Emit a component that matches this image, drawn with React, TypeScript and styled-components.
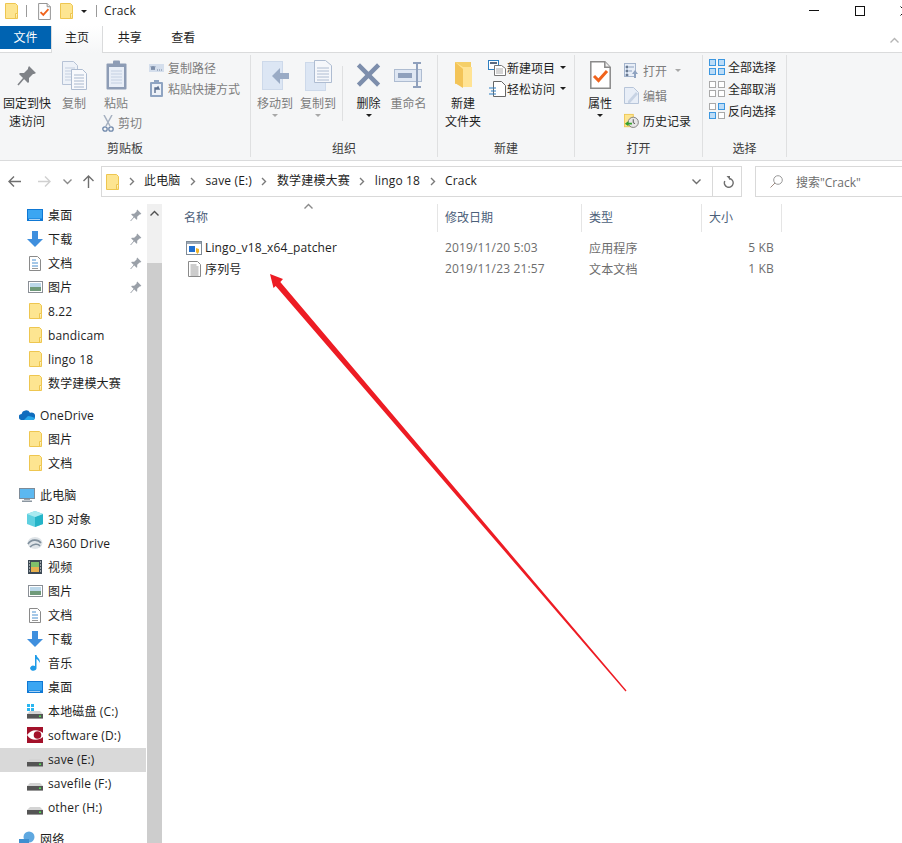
import React from 'react';
import styled, { createGlobalStyle } from 'styled-components';

const GlobalStyle = createGlobalStyle`
    html, body {
        margin: 0;
        padding: 0;
        background: #fff;
        overflow: hidden;
    }
    body {
        font-family: "Open Sans", "Noto Sans CJK SC", sans-serif;
        font-size: 12px;
        color: #1e1e1e;
    }
`;

const Window = styled.div`
    position: relative;
    width: 902px;
    height: 843px;
    display: flex;
    flex-direction: column;
    overflow: hidden;
    background: #fff;
`;

/* ---------- title bar ---------- */

const TitleBar = styled.div`
    height: 26px;
    flex-shrink: 0;
    display: flex;
    align-items: center;
    padding: 0 0 4px 5px;
    box-sizing: border-box;
`;

const TitleDivider = styled.span<{ $left: number; $right: number }>`
    width: 1px;
    height: 12px;
    background: #9a9a9a;
    margin: 0 ${p => p.$right}px 0 ${p => p.$left}px;
`;

const TitleSlot = styled.span<{ $left: number }>`
    display: flex;
    margin-left: ${p => p.$left}px;
`;

const TitleText = styled.span`
    font-size: 12px;
    line-height: 16px;
    letter-spacing: 0.15px;
    flex: 1;
`;

const WindowButton = styled.span<{ $width: number; $inset?: number }>`
    width: ${p => p.$width}px;
    display: flex;
    justify-content: ${p => (p.$inset ? 'flex-start' : 'center')};
    padding-left: ${p => p.$inset || 0}px;
    box-sizing: border-box;
    flex-shrink: 0;
    svg {
        flex-shrink: 0;
    }
`;

/* ---------- tabs ---------- */

const TabRow = styled.div`
    height: 27px;
    flex-shrink: 0;
    display: flex;
    align-items: flex-start;
    box-sizing: border-box;
    border-bottom: 1px solid #dadbdc;
`;

const FileTab = styled.div`
    width: 51px;
    height: 23px;
    background: #0063b1;
    color: #fff;
    text-align: center;
    line-height: 23px;
`;

const Tab = styled.div<{ $active?: boolean }>`
    width: 53.5px;
    height: 26px;
    line-height: 23px;
    text-align: center;
    box-sizing: border-box;
    ${p =>
        p.$active &&
        `
        width: 52px;
        height: 27px;
        background: linear-gradient(#fff, #f5f6f7);
        border: 1px solid #dadbdc;
        border-width: 0 1px;
    `}
`;

const Collapse = styled.span`
    margin: 11px 0 0 auto;
    display: flex;
    width: 12px;
`;

/* ---------- ribbon ---------- */

const Ribbon = styled.div`
    height: 108px;
    flex-shrink: 0;
    box-sizing: border-box;
    display: flex;
    background: #f5f6f7;
    border-bottom: 1px solid #dadbdc;
    padding-top: 2px;
`;

const Group = styled.div<{ $width: number }>`
    width: ${p => p.$width}px;
    height: 102px;
    box-sizing: border-box;
    border-right: 1px solid #dfe0e1;
    display: flex;
    flex-direction: column;
    flex-shrink: 0;
`;

const GroupBody = styled.div<{ $pad?: number }>`
    flex: 1;
    display: flex;
    align-items: flex-start;
    padding-left: ${p => p.$pad || 0}px;
    min-height: 0;
`;

const GroupLabel = styled.div`
    height: 18px;
    line-height: 20px;
    text-align: center;
    color: #3c3c3c;
    flex-shrink: 0;
`;

const BigButton = styled.div<{ $width: number; $muted?: boolean; $left?: number }>`
    width: ${p => p.$width}px;
    margin-left: ${p => p.$left || 0}px;
    flex-shrink: 0;
    color: ${p => (p.$muted ? '#7d7d7d' : '#1e1e1e')};
    display: flex;
    flex-direction: column;
    align-items: center;
    text-align: center;
    line-height: 18px;
`;

const BigIcon = styled.div`
    height: 40px;
    display: flex;
    align-items: center;
    justify-content: center;
    box-sizing: border-box;
    width: 100%;
`;

const Caret = styled.span<{ $muted?: boolean }>`
    width: 0;
    height: 0;
    border: 3px solid transparent;
    border-bottom: 0;
    border-top: 3px solid ${p => (p.$muted ? '#a8a8a8' : '#1e1e1e')};
    flex-shrink: 0;
    margin: 1px 0 0 0;
`;

const InlineCaret = styled(Caret)`
    margin: 0 0 0 4px;
`;

const TitleCaret = styled(Caret)`
    margin: 0 0 0 8px;
`;

const Stack = styled.div<{ $width: number; $top?: number; $left?: number }>`
    width: ${p => p.$width}px;
    flex-shrink: 0;
    margin: ${p => p.$top || 0}px 0 0 ${p => p.$left || 0}px;
    display: flex;
    flex-direction: column;
`;

const SmallAction = styled.div<{ $height?: number; $muted?: boolean; $gap?: number; $indent?: number }>`
    height: ${p => p.$height || 21}px;
    display: flex;
    align-items: center;
    gap: ${p => (p.$gap === undefined ? 4 : p.$gap)}px;
    padding-left: ${p => p.$indent || 0}px;
    white-space: nowrap;
    color: ${p => (p.$muted ? '#7d7d7d' : '#1e1e1e')};
`;

const SmallIcon = styled.span<{ $width?: number }>`
    width: ${p => p.$width || 15}px;
    display: flex;
    justify-content: center;
    flex-shrink: 0;
`;

const InnerDivider = styled.span`
    width: 1px;
    height: 55px;
    margin: 11px 0 0 3px;
    background: #dfe0e1;
    flex-shrink: 0;
`;

/* ---------- address row ---------- */

const AddressRow = styled.div`
    height: 43px;
    flex-shrink: 0;
    display: flex;
    align-items: flex-start;
    padding-top: 5px;
    box-sizing: border-box;
`;

const NavButton = styled.span<{ $width: number }>`
    width: ${p => p.$width}px;
    height: 31px;
    display: flex;
    align-items: center;
    justify-content: center;
    flex-shrink: 0;
`;

const AddressBox = styled.div`
    width: 641px;
    height: 31px;
    flex-shrink: 0;
    box-sizing: border-box;
    border: 1px solid #d9d9d9;
    display: flex;
    align-items: center;
    padding-left: 4px;
`;

const CrumbSep = styled.span`
    width: 25px;
    display: flex;
    justify-content: center;
    flex-shrink: 0;
`;

const Crumb = styled.span`
    white-space: nowrap;
    letter-spacing: 0.15px;
    line-height: 16px;
    margin-top: -1px;
`;

const BoxEnd = styled.div`
    margin-left: auto;
    display: flex;
    align-items: center;
    height: 100%;
`;

const RefreshCell = styled.span`
    width: 29px;
    height: 100%;
    border-left: 1px solid #d9d9d9;
    display: flex;
    align-items: center;
    justify-content: center;
    margin-left: 11px;
    padding-left: 2px;
    box-sizing: border-box;
`;

const SearchBox = styled.div`
    flex: 1;
    height: 31px;
    margin-left: 13px;
    box-sizing: border-box;
    border: 1px solid #d9d9d9;
    border-right: 0;
    display: flex;
    align-items: center;
    padding-left: 14px;
    gap: 13px;
    color: #6d6d6d;
`;

/* ---------- main area ---------- */

const Main = styled.div`
    flex: 1;
    display: flex;
    min-height: 0;
`;

const Sidebar = styled.nav`
    width: 147px;
    flex-shrink: 0;
    overflow: hidden;
`;

const NavRow = styled.div<{ $level: number; $selected?: boolean; $spaced?: boolean }>`
    height: 24px;
    width: 146px;
    margin-top: ${p => (p.$spaced ? 8 : 0)}px;
    box-sizing: border-box;
    padding: 0 4px 2px ${p => (p.$level ? 27 : 19)}px;
    display: flex;
    align-items: center;
    background: ${p => (p.$selected ? '#d9d9d9' : 'transparent')};
    white-space: nowrap;
    letter-spacing: 0.15px;
`;

const NavIcon = styled.span`
    width: 16px;
    margin-right: 5px;
    display: flex;
    justify-content: center;
    flex-shrink: 0;
`;

const PinSlot = styled.span`
    margin-left: auto;
    display: flex;
`;

const Scrollbar = styled.div`
    width: 15px;
    flex-shrink: 0;
    background: #f0f0f0;
    display: flex;
    flex-direction: column;
`;

const ScrollUp = styled.div`
    height: 59px;
    display: flex;
    justify-content: center;
    padding-top: 6px;
    box-sizing: border-box;
    flex-shrink: 0;
`;

const ScrollThumb = styled.div`
    flex: 1;
    background: #cdcdcd;
`;

const FileList = styled.section`
    flex: 1;
    min-width: 0;
`;

const Columns = '276px 144px 120px 80px';

const HeaderRow = styled.div`
    display: grid;
    grid-template-columns: ${Columns};
    height: 27px;
    margin-bottom: 6px;
`;

const HeaderCell = styled.div<{ $first?: boolean }>`
    position: relative;
    box-sizing: border-box;
    border-right: 1px solid #e5e5e5;
    padding-left: ${p => (p.$first ? 22 : 7)}px;
    line-height: 28px;
    color: #4c607a;
`;

const SortMark = styled.span`
    position: absolute;
    top: -1px;
    left: 142px;
    display: flex;
`;

const FileRow = styled.div`
    display: grid;
    grid-template-columns: ${Columns};
    height: 21px;
    align-items: center;
    color: #6d6d6d;
    letter-spacing: 0.15px;
`;

const NameCell = styled.div`
    display: flex;
    align-items: center;
    padding-left: 24px;
    gap: 3px;
    color: #1e1e1e;
`;

const FileIcon = styled.span`
    width: 16px;
    display: flex;
    justify-content: center;
    flex-shrink: 0;
`;

const Cell = styled.div`
    padding-left: 7px;
`;

const SizeCell = styled.div`
    text-align: right;
    padding-right: 8px;
`;

const ArrowLayer = styled.svg`
    position: absolute;
    top: 0;
    left: 0;
    pointer-events: none;
`;

/* ---------- icons ---------- */

const Folder = () => (
    <svg width="13" height="16" viewBox="0 0 13 16">
        <path d="M.5.5h10l2 2v13H.5z" fill="#fde591" stroke="#eec650" />
        <path d="M10.5 15.5v-5h2" fill="#fff3c4" stroke="#eec650" />
    </svg>
);

const DocCheck = ({ w = 13, h = 17 }: { w?: number; h?: number }) => (
    <svg width={w} height={h} viewBox="0 0 21 28">
        <path d="M.8.8h14l5.4 5.4v21H.8z" fill="#fff" stroke="#8a8a8a" strokeWidth="1.5" />
        <path d="M14.8.8v5.4h5.4" fill="#eee" stroke="#8a8a8a" strokeWidth="1.5" />
        <path d="M4 15l4.5 4.5L17 10" fill="none" stroke="#f0631c" strokeWidth="3" />
    </svg>
);

const Pin = ({ size = 20, color = '#7f8287' }: { size?: number; color?: string }) => (
    <svg width={size} height={size + 2} viewBox="0 0 20 22">
        <path d="M12 1l7 7-2 1-1 0-4 4 0 4-1 1-3-3-3-3-3-3 1-1 4 0 4-4 0-1z" transform="translate(0 1)" fill={color} />
        <path d="M7 14l-6 7" stroke={color} strokeWidth="1.6" />
    </svg>
);

const CopyDocs = () => (
    <svg width="25" height="29" viewBox="0 0 25 29">
        <path d="M.5.5h11l4 4v19H.5z" fill="#eef2f8" stroke="#b7c3d6" />
        <path d="M3 7h10M3 10h10M3 13h6M3 16h6M3 19h6" stroke="#c4cfe0" />
        <path d="M9.5 8.5h11l4 4v16h-15z" fill="#f8f9fc" stroke="#aebcd1" />
        <path d="M12 14h10M12 17h10M12 20h10M12 23h10M12 26h10" stroke="#a9b8ce" />
    </svg>
);

const Clipboard = () => (
    <svg width="21" height="30" viewBox="0 0 21 30">
        <rect x=".5" y="3.5" width="20" height="26" fill="#8d9cb5" rx="1" />
        <rect x="3" y="7" width="15" height="20" fill="#e8eef7" />
        <rect x="7" y=".5" width="7" height="5" fill="#8d9cb5" rx="1" />
        <path d="M5 11h11M5 14h11M5 17h11M5 20h11M5 23h11" stroke="#c4d0e2" />
    </svg>
);

const Scissors = () => (
    <svg width="12" height="17" viewBox="0 0 12 17">
        <path d="M2 0l6 11M10 0L4 11" stroke="#a5b0c0" strokeWidth="1.5" fill="none" />
        <circle cx="3" cy="14" r="2.2" fill="none" stroke="#6f88ab" strokeWidth="1.3" />
        <circle cx="9" cy="14" r="2.2" fill="none" stroke="#6f88ab" strokeWidth="1.3" />
    </svg>
);

const CopyPath = () => (
    <svg width="15" height="8" viewBox="0 0 15 8">
        <rect width="15" height="8" fill="#d4deec" />
        <path d="M2 2l1 4 1-4 1 4 1-4M8 6h1M10 6h1M12 6h1" stroke="#5d7191" strokeWidth=".8" fill="none" />
    </svg>
);

const PasteShortcut = () => (
    <svg width="13" height="17" viewBox="0 0 13 17">
        <rect y="2" width="13" height="15" fill="#8fa4c2" rx="1" />
        <rect x="2" y="4" width="9" height="11" fill="#eef2f8" />
        <rect x="4" width="5" height="3" fill="#8fa4c2" />
        <path d="M5 13V8h3M8 7l-2 2 3 0z" stroke="#5d7191" strokeWidth="1.4" fill="none" />
    </svg>
);

const MoveTo = () => (
    <svg width="27" height="29" viewBox="0 0 27 29">
        <rect x=".5" y=".5" width="20" height="28" fill="#dce6f4" stroke="#cdd9ea" />
        <path d="M27 12h-9V7l-8 8 8 8v-5h9z" fill="#9aabc5" />
    </svg>
);

const CopyTo = () => (
    <svg width="27" height="31" viewBox="0 0 27 31">
        <rect x=".5" y="2.5" width="20" height="28" fill="#dce6f4" stroke="#cdd9ea" />
        <path d="M9.5.5h11l6 5v17h-17z" fill="#f5f7fb" stroke="#aebcd1" />
        <path d="M12 8h12M12 11h12M12 14h12M12 17h12M12 20h12" stroke="#aebcd1" />
    </svg>
);

const DeleteX = () => (
    <svg width="26" height="26" viewBox="0 0 26 26">
        <path d="M2.5 2.5l21 21M23.5 2.5l-21 21" stroke="#7d8eac" strokeWidth="4.6" />
    </svg>
);

const Rename = () => (
    <svg width="29" height="26" viewBox="0 0 29 26">
        <rect x=".5" y="7.5" width="27" height="12" fill="#dfe7f3" stroke="#aebcd1" />
        <rect x="4" y="11" width="14" height="5" fill="#8fa0bc" />
        <path d="M19 1h8M23 1v24M19 25h8" stroke="#8fa0bc" strokeWidth="2" fill="none" />
    </svg>
);

const NewFolder = () => (
    <svg width="19" height="28" viewBox="0 0 19 28">
        <path d="M1 1h16v22H1z" fill="#f5cf68" />
        <path d="M1 1l8 5h9v20H9l-8-4z" fill="#ffe394" />
        <path d="M1 1l8 7v19l-8-5z" fill="#f3c458" />
    </svg>
);

const NewItem = () => (
    <svg width="18" height="16" viewBox="0 0 18 16">
        <rect x=".5" y=".5" width="10" height="9" fill="#fff" stroke="#2f7fc1" />
        <rect x="2" y="2" width="7" height="2" fill="#5d6b80" />
        <path d="M6.5 5.5h7l4 3v7h-11z" fill="#fff" stroke="#777" />
        <path d="M8 9h7M8 11h7M8 13h7" stroke="#aaa" />
    </svg>
);

const EasyAccess = () => (
    <svg width="17" height="16" viewBox="0 0 17 16">
        <path d="M4.5.5h8l4 4v11h-12z" fill="#fff" stroke="#666" />
        <path d="M0 7h7M2 10h5M0 13h7" stroke="#2f7fc1" strokeWidth="1.2" />
    </svg>
);

const OpenIcon = () => (
    <svg width="15" height="15" viewBox="0 0 15 15">
        <rect x=".5" y=".5" width="11" height="13" fill="#e8eef7" stroke="#a4b4cc" />
        <path d="M2 3h2v2H2zM2 7h2v2H2zM2 11h2v2H2zM5 4h5M5 8h3" stroke="#8fa3c0" />
        <path d="M8 11l3-4 3 4h-2v4h-2v-4z" fill="#8fa3c0" />
    </svg>
);

const EditIcon = () => (
    <svg width="15" height="17" viewBox="0 0 15 17">
        <path d="M.5.5h9l5 5v11H.5z" fill="#e8eef7" stroke="#b7c5d9" />
        <path d="M4 14l8-9 2 2-8 9H4z" fill="#c7d3e4" />
    </svg>
);

const HistoryIcon = () => (
    <svg width="17" height="16" viewBox="0 0 17 16">
        <rect x=".5" y=".5" width="10" height="14" fill="#fde591" stroke="#eec650" />
        <circle cx="10.5" cy="9.5" r="5.8" fill="#e6e6e6" stroke="#777" />
        <path d="M10.5 6v4l2 1" stroke="#444" fill="none" />
        <path d="M1 11l4-3v2h4v2H5v2z" fill="#34a02c" />
    </svg>
);

const Grid = ({ on }: { on: boolean[] }) => {
    const cells = [
        [0, 0],
        [9, 0],
        [0, 9],
        [9, 9],
    ];
    return (
        <svg width="16" height="16" viewBox="0 0 16 16">
            {cells.map(([x, y], i) => (
                <rect
                    key={i}
                    x={x + 0.5}
                    y={y + 0.5}
                    width="6"
                    height="6"
                    fill={on[i] ? '#bcdcf7' : '#fff'}
                    stroke={on[i] ? '#3c97e0' : '#a9a9a9'}
                />
            ))}
        </svg>
    );
};

const Chevron = ({ dir = 'right', color = '#7a7a7a' }: { dir?: string; color?: string }) => {
    const d: Record<string, string> = {
        right: 'M1 1l3.5 3.5L1 8',
        down: 'M.5 1.5L4.5 5.5 8.5 1.5',
        up: 'M.5 5.5L4.5 1.5 8.5 5.5',
    };
    return (
        <svg width={dir === 'right' ? 6 : 9} height={dir === 'right' ? 9 : 7} viewBox={dir === 'right' ? '0 0 6 9' : '0 0 9 7'}>
            <path d={d[dir]} fill="none" stroke={color} strokeWidth="1.4" />
        </svg>
    );
};

const ArrowGlyph = ({ d, color }: { d: string; color: string }) => (
    <svg width="13" height="13" viewBox="0 0 13 13">
        <path d={d} fill="none" stroke={color} strokeWidth="1.4" />
    </svg>
);

const Desktop = () => (
    <svg width="16" height="12" viewBox="0 0 16 12">
        <rect width="16" height="12" fill="#0f78d4" />
        <rect x="1" y="1" width="14" height="8.5" fill="#3ba6f2" />
        <rect x="2" y="10.2" width="11" height=".8" fill="#cfe8fb" />
    </svg>
);

const DownArrow = () => (
    <svg width="16" height="16" viewBox="0 0 16 16">
        <path d="M5 0h6v8h5l-8 8-8-8h5z" fill="#3f8fde" />
    </svg>
);

const TextDoc = () => (
    <svg width="12" height="15" viewBox="0 0 12 15">
        <path d="M.5.5h8l3 3v11H.5z" fill="#fff" stroke="#8a8a8a" />
        <path d="M3 4h4M3 7h6M3 10h6" stroke="#4a90d0" />
        <path d="M3 12.5h6" stroke="#999" />
    </svg>
);

const Picture = () => (
    <svg width="15" height="12" viewBox="0 0 15 12">
        <rect x=".5" y=".5" width="14" height="11" fill="#fff" stroke="#8a8f96" />
        <rect x="2" y="2" width="11" height="4" fill="#bcd8ea" />
        <rect x="2" y="6" width="11" height="4" fill="#6f9a7a" />
    </svg>
);

const Cloud = () => (
    <svg width="16" height="10" viewBox="0 0 16 10">
        <path d="M3 10a3 3 0 0 1-.4-6A4.5 4.5 0 0 1 11 2.8 3.6 3.6 0 0 1 16 7c0 2-1 3-2.5 3z" fill="#0f6cbd" />
        <path d="M5 10l4-4 3 .4L16 8c-.3 1.3-1.2 2-2.5 2z" fill="#28a8ea" />
    </svg>
);

const Computer = () => (
    <svg width="16" height="14" viewBox="0 0 16 14">
        <rect x=".5" y=".5" width="15" height="10" fill="#5cb8f0" stroke="#7d8b98" />
        <rect x="5" y="11" width="6" height="1" fill="#9aa4ad" />
        <rect x="3" y="12.5" width="10" height="1.5" fill="#8b96a0" />
    </svg>
);

const Cube = () => (
    <svg width="16" height="16" viewBox="0 0 16 16">
        <path d="M8 0l8 3v10l-8 3-8-3V3z" fill="#5fd0e0" />
        <path d="M8 6l8-3v10l-8 3z" fill="#25b4c8" />
        <path d="M8 0l8 3-8 3-8-3z" fill="#a9eaf0" />
    </svg>
);

const A360 = () => (
    <svg width="16" height="14" viewBox="0 0 16 14">
        <ellipse cx="8" cy="7" rx="7.5" ry="6" fill="#dfe4e8" />
        <path d="M1 8c3-5 10-5 13-1M3 11c3-3 8-4 10-1" stroke="#7f8f9c" strokeWidth="1.6" fill="none" />
    </svg>
);

const Video = () => (
    <svg width="14" height="14" viewBox="0 0 14 14">
        <rect width="14" height="14" fill="#3d4a55" />
        <rect x="3" y="2" width="8" height="5" fill="#7fc06a" />
        <rect x="3" y="7" width="8" height="5" fill="#e7b04f" />
        <path d="M1 2h1M1 5h1M1 8h1M1 11h1M12 2h1M12 5h1M12 8h1M12 11h1" stroke="#fff" />
    </svg>
);

const Music = () => (
    <svg width="12" height="16" viewBox="0 0 12 16">
        <path d="M6 0h1.5c.5 3 4.5 4 3 8-.3-2-2-3.5-3-4v9.500A3.200 2.600 0 1 1 6 11z" fill="#1e9be8" />
    </svg>
);

const Drive = ({ windows }: { windows?: boolean }) => (
    <svg width="16" height="15" viewBox="0 0 16 15">
        {windows && <path d="M0 0h3v3H0zM4 0h3v3H4zM0 4h3v3H0zM4 4h3v3H4z" fill="#29b6f0" />}
        <path d="M3 7h10l3 3H0z" fill="#d4d4d4" />
        <rect y="10" width="16" height="4.5" fill="#555" />
        <rect x="12" y="11.5" width="2" height="1.5" fill="#4fe04f" />
        <rect y="14" width="16" height="1" fill="#999" />
    </svg>
);

const RedDrive = () => (
    <svg width="16" height="16" viewBox="0 0 16 16">
        <rect width="16" height="16" fill="#a3112a" />
        <path d="M0 8c4-6 11-6 16-2v4C11 14 4 14 0 8z" fill="#fff" />
        <circle cx="10.5" cy="8" r="3.8" fill="#a3112a" />
    </svg>
);

const Network = () => (
    <svg width="16" height="16" viewBox="0 0 16 16">
        <circle cx="10" cy="6" r="5.5" fill="#5fa8e0" />
        <rect y="8" width="10" height="8" fill="#3f8fd0" />
    </svg>
);

const AppIcon = () => (
    <svg width="16" height="14" viewBox="0 0 16 14">
        <rect x=".5" y=".5" width="15" height="13" fill="#fff" stroke="#7f8b97" />
        <rect x="1" y="1" width="14" height="2" fill="#9aa7b5" />
        <rect x="3" y="5" width="6" height="6" fill="#1f6fd0" />
        <path d="M10 7l3 1v3l-1.5 2-1.5-2z" fill="#f0b429" />
    </svg>
);

const TextFile = () => (
    <svg width="13" height="16" viewBox="0 0 13 16">
        <path d="M.5.5h9l3 3v12H.5z" fill="#fff" stroke="#8a8a8a" />
        <path d="M2.5 4h6M2.5 6h8M2.5 8h8M2.5 10h8M2.5 12h8M2.5 14h8" stroke="#9a9a9a" />
    </svg>
);

const SearchGlass = () => (
    <svg width="13" height="13" viewBox="0 0 13 13">
        <circle cx="8" cy="5" r="4.3" fill="none" stroke="#9a9a9a" />
        <path d="M5 8l-4.500 4.500" stroke="#a08a80" />
    </svg>
);

const Refresh = () => (
    <svg width="11" height="13" viewBox="0 0 11 13">
        <path d="M6 2.500A4.400 4.400 0 1 1 1.800 5" fill="none" stroke="#6f6f6f" strokeWidth="1.4" transform="translate(0 1)" />
        <path d="M3.500 0h3.500v4z" fill="#6f6f6f" transform="translate(0 1)" />
    </svg>
);

/* ---------- data ---------- */

type NavEntry = {
    label: string;
    icon: React.ReactNode;
    level: number;
    pinned?: boolean;
    selected?: boolean;
    spaced?: boolean;
};

const navEntries: NavEntry[] = [
    { label: '桌面', icon: <Desktop />, level: 1, pinned: true },
    { label: '下载', icon: <DownArrow />, level: 1, pinned: true },
    { label: '文档', icon: <TextDoc />, level: 1, pinned: true },
    { label: '图片', icon: <Picture />, level: 1, pinned: true },
    { label: '8.22', icon: <Folder />, level: 1 },
    { label: 'bandicam', icon: <Folder />, level: 1 },
    { label: 'lingo 18', icon: <Folder />, level: 1 },
    { label: '数学建模大赛', icon: <Folder />, level: 1 },
    { label: 'OneDrive', icon: <Cloud />, level: 0, spaced: true },
    { label: '图片', icon: <Folder />, level: 1 },
    { label: '文档', icon: <Folder />, level: 1 },
    { label: '此电脑', icon: <Computer />, level: 0, spaced: true },
    { label: '3D 对象', icon: <Cube />, level: 1 },
    { label: 'A360 Drive', icon: <A360 />, level: 1 },
    { label: '视频', icon: <Video />, level: 1 },
    { label: '图片', icon: <Picture />, level: 1 },
    { label: '文档', icon: <TextDoc />, level: 1 },
    { label: '下载', icon: <DownArrow />, level: 1 },
    { label: '音乐', icon: <Music />, level: 1 },
    { label: '桌面', icon: <Desktop />, level: 1 },
    { label: '本地磁盘 (C:)', icon: <Drive windows />, level: 1 },
    { label: 'software (D:)', icon: <RedDrive />, level: 1 },
    { label: 'save (E:)', icon: <Drive />, level: 1, selected: true },
    { label: 'savefile (F:)', icon: <Drive />, level: 1 },
    { label: 'other (H:)', icon: <Drive />, level: 1 },
    { label: '网络', icon: <Network />, level: 0, spaced: true },
];

const crumbs = ['此电脑', 'save (E:)', '数学建模大赛', 'lingo 18', 'Crack'];

const files = [
    { name: 'Lingo_v18_x64_patcher', icon: <AppIcon />, date: '2019/11/20 5:03', type: '应用程序', size: '5 KB' },
    { name: '序列号', icon: <TextFile />, date: '2019/11/23 21:57', type: '文本文档', size: '1 KB' },
];

const App = () => {
    return (
        <Window>
            <GlobalStyle />
            <TitleBar>
                <Folder />
                <TitleDivider $left={8} $right={11} />
                <DocCheck />
                <TitleSlot $left={9}>
                    <Folder />
                </TitleSlot>
                <TitleCaret />
                <TitleDivider $left={9} $right={7} />
                <TitleText>Crack</TitleText>
                <WindowButton $width={46}>
                    <svg width="10" height="2" viewBox="0 0 10 2">
                        <rect width="10" height="1" fill="#111" />
                    </svg>
                </WindowButton>
                <WindowButton $width={46}>
                    <svg width="10" height="10" viewBox="0 0 10 10">
                        <rect x=".5" y=".5" width="9" height="9" fill="none" stroke="#111" />
                    </svg>
                </WindowButton>
                <WindowButton $width={19} $inset={17}>
                    <svg width="10" height="10" viewBox="0 0 10 10">
                        <path d="M.5.5l9 9M9.5.5l-9 9" stroke="#111" />
                    </svg>
                </WindowButton>
            </TitleBar>

            <TabRow>
                <FileTab>文件</FileTab>
                <Tab $active>主页</Tab>
                <Tab>共享</Tab>
                <Tab>查看</Tab>
                <Collapse>
                    <Chevron dir="up" color="#b5b5b5" />
                </Collapse>
            </TabRow>

            <Ribbon>
                <Group $width={251}>
                    <GroupBody>
                        <BigButton $width={54}>
                            <BigIcon>
                                <Pin />
                            </BigIcon>
                            固定到快
                            <br />
                            速访问
                        </BigButton>
                        <BigButton $width={40} $muted>
                            <BigIcon>
                                <CopyDocs />
                            </BigIcon>
                            复制
                        </BigButton>
                        <Stack $width={44}>
                            <BigButton $width={44} $muted>
                                <BigIcon>
                                    <Clipboard />
                                </BigIcon>
                                粘贴
                            </BigButton>
                            <SmallAction $height={20} $muted $indent={8} $gap={4}>
                                <SmallIcon $width={12}>
                                    <Scissors />
                                </SmallIcon>
                                剪切
                            </SmallAction>
                        </Stack>
                        <Stack $width={100} $top={2} $left={11}>
                            <SmallAction $muted>
                                <SmallIcon>
                                    <CopyPath />
                                </SmallIcon>
                                复制路径
                            </SmallAction>
                            <SmallAction $muted>
                                <SmallIcon>
                                    <PasteShortcut />
                                </SmallIcon>
                                粘贴快捷方式
                            </SmallAction>
                        </Stack>
                    </GroupBody>
                    <GroupLabel>剪贴板</GroupLabel>
                </Group>

                <Group $width={187}>
                    <GroupBody $pad={2}>
                        <BigButton $width={44} $muted>
                            <BigIcon>
                                <MoveTo />
                            </BigIcon>
                            移动到
                            <Caret $muted />
                        </BigButton>
                        <BigButton $width={42} $muted>
                            <BigIcon>
                                <CopyTo />
                            </BigIcon>
                            复制到
                            <Caret $muted />
                        </BigButton>
                        <InnerDivider />
                        <BigButton $width={25} $left={13}>
                            <BigIcon>
                                <DeleteX />
                            </BigIcon>
                            删除
                            <Caret />
                        </BigButton>
                        <BigButton $width={39} $muted $left={8}>
                            <BigIcon>
                                <Rename />
                            </BigIcon>
                            重命名
                        </BigButton>
                    </GroupBody>
                    <GroupLabel>组织</GroupLabel>
                </Group>

                <Group $width={137}>
                    <GroupBody $pad={7}>
                        <BigButton $width={36}>
                            <BigIcon>
                                <NewFolder />
                            </BigIcon>
                            新建
                            <br />
                            文件夹
                        </BigButton>
                        <Stack $width={85} $top={2} $left={7}>
                            <SmallAction $gap={1}>
                                <SmallIcon $width={18}>
                                    <NewItem />
                                </SmallIcon>
                                新建项目
                                <InlineCaret />
                            </SmallAction>
                            <SmallAction $gap={1}>
                                <SmallIcon $width={18}>
                                    <EasyAccess />
                                </SmallIcon>
                                轻松访问
                                <InlineCaret />
                            </SmallAction>
                        </Stack>
                    </GroupBody>
                    <GroupLabel>新建</GroupLabel>
                </Group>

                <Group $width={128}>
                    <GroupBody $pad={12}>
                        <BigButton $width={26}>
                            <BigIcon>
                                <DocCheck w={21} h={28} />
                            </BigIcon>
                            属性
                            <Caret />
                        </BigButton>
                        <Stack $width={80} $top={3} $left={11}>
                            <SmallAction $height={25} $muted>
                                <SmallIcon $width={15}>
                                    <OpenIcon />
                                </SmallIcon>
                                打开
                                <InlineCaret $muted />
                            </SmallAction>
                            <SmallAction $height={25} $muted>
                                <SmallIcon $width={15}>
                                    <EditIcon />
                                </SmallIcon>
                                编辑
                            </SmallAction>
                            <SmallAction $height={25}>
                                <SmallIcon $width={15}>
                                    <HistoryIcon />
                                </SmallIcon>
                                历史记录
                            </SmallAction>
                        </Stack>
                    </GroupBody>
                    <GroupLabel>打开</GroupLabel>
                </Group>

                <Group $width={84}>
                    <GroupBody $pad={6}>
                        <Stack $width={76} $top={1}>
                            <SmallAction $height={22} $gap={3}>
                                <Grid on={[true, true, true, true]} />
                                全部选择
                            </SmallAction>
                            <SmallAction $height={22} $gap={3}>
                                <Grid on={[false, false, false, false]} />
                                全部取消
                            </SmallAction>
                            <SmallAction $height={22} $gap={3}>
                                <Grid on={[false, true, true, false]} />
                                反向选择
                            </SmallAction>
                        </Stack>
                    </GroupBody>
                    <GroupLabel>选择</GroupLabel>
                </Group>
            </Ribbon>

            <AddressRow>
                <NavButton $width={28}>
                    <ArrowGlyph d="M13 6.5H1M6 1.5l-5 5 5 5" color="#6f6f6f" />
                </NavButton>
                <NavButton $width={32}>
                    <ArrowGlyph d="M0 6.5h12M7 1.5l5 5-5 5" color="#d0d0d0" />
                </NavButton>
                <NavButton $width={15}>
                    <Chevron dir="down" color="#8a8a8a" />
                </NavButton>
                <NavButton $width={26}>
                    <ArrowGlyph d="M6.5 13V1M1.5 6l5-5 5 5" color="#6f6f6f" />
                </NavButton>
                <AddressBox>
                    <Folder />
                    {crumbs.map(crumb => (
                        <React.Fragment key={crumb}>
                            <CrumbSep>
                                <Chevron />
                            </CrumbSep>
                            <Crumb>{crumb}</Crumb>
                        </React.Fragment>
                    ))}
                    <BoxEnd>
                        <Chevron dir="down" color="#6f6f6f" />
                        <RefreshCell>
                            <Refresh />
                        </RefreshCell>
                    </BoxEnd>
                </AddressBox>
                <SearchBox>
                    <SearchGlass />
                    搜索"Crack"
                </SearchBox>
            </AddressRow>

            <Main>
                <Sidebar>
                    {navEntries.map((entry, i) => (
                        <NavRow key={i} $level={entry.level} $selected={entry.selected} $spaced={entry.spaced}>
                            <NavIcon>{entry.icon}</NavIcon>
                            {entry.label}
                            {entry.pinned && (
                                <PinSlot>
                                    <Pin size={12} color="#9aa0a8" />
                                </PinSlot>
                            )}
                        </NavRow>
                    ))}
                </Sidebar>
                <Scrollbar>
                    <ScrollUp>
                        <Chevron dir="up" color="#505050" />
                    </ScrollUp>
                    <ScrollThumb />
                </Scrollbar>
                <FileList>
                    <HeaderRow>
                        <HeaderCell $first>
                            名称
                            <SortMark>
                                <Chevron dir="up" color="#8a8a8a" />
                            </SortMark>
                        </HeaderCell>
                        <HeaderCell>修改日期</HeaderCell>
                        <HeaderCell>类型</HeaderCell>
                        <HeaderCell>大小</HeaderCell>
                    </HeaderRow>
                    {files.map(file => (
                        <FileRow key={file.name}>
                            <NameCell>
                                <FileIcon>{file.icon}</FileIcon>
                                {file.name}
                            </NameCell>
                            <Cell>{file.date}</Cell>
                            <Cell>{file.type}</Cell>
                            <SizeCell>{file.size}</SizeCell>
                        </FileRow>
                    ))}
                </FileList>
            </Main>

            <ArrowLayer width="902" height="843" viewBox="0 0 902 843">
                <path d="M270 274L283 279 280.3 282 626.5 690.5 625.500 691.500 275.700 286 273.500 288z" fill="#ed1c24" />
            </ArrowLayer>
        </Window>
    );
};

export default App;
